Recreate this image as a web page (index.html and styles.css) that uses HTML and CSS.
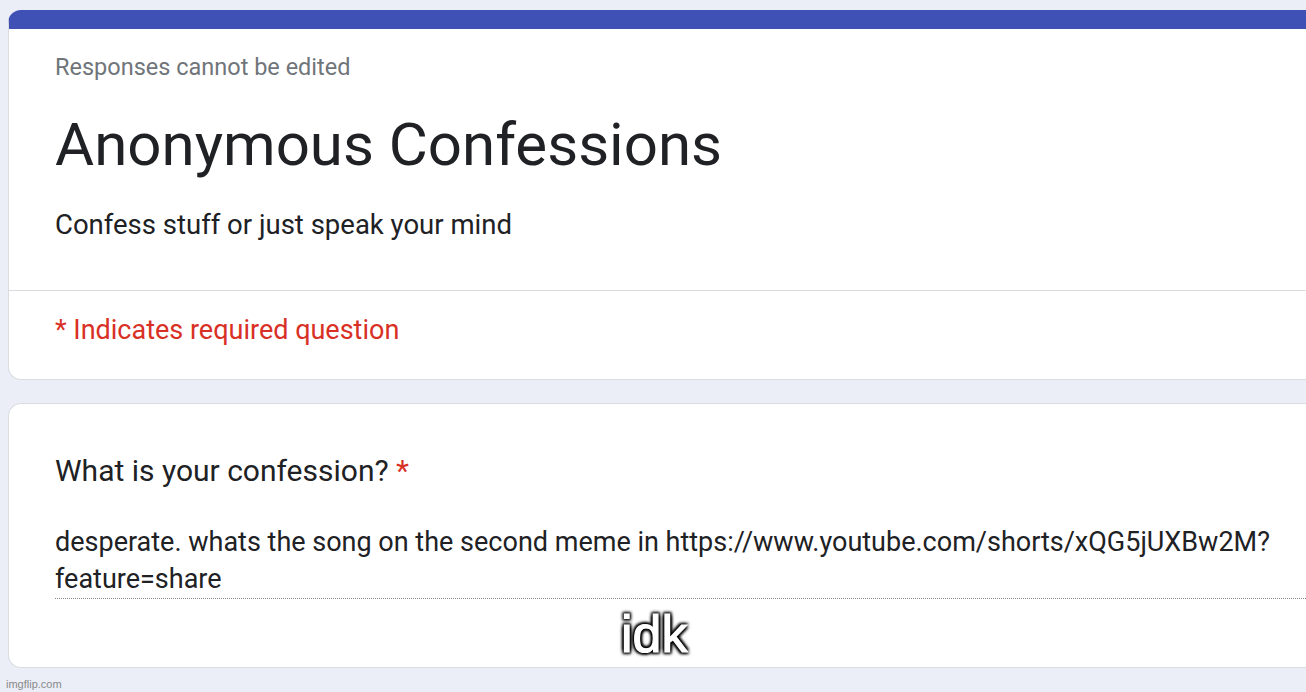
FILE: index.html
```html
<!DOCTYPE html>
<html>
<head>
<meta charset="utf-8">
<link rel="stylesheet" href="styles.css">
</head>
<body>
<div class="page">
  <div class="card header-card">
    <div class="header-main">
      <div class="note">Responses cannot be edited</div>
      <h1 class="title">Anonymous Confessions</h1>
      <div class="desc">Confess stuff or just speak your mind</div>
    </div>
    <div class="divider"></div>
    <div class="required">* Indicates required question</div>
  </div>
  <div class="card question-card">
    <div class="question">What is your confession? <span class="star">*</span></div>
    <div class="answer">desperate. whats the song on the second meme in https://www.youtube.com/shorts/xQG5jUXBw2M?<br>feature=share</div>
    <div class="caption">idk</div>
  </div>
  <div class="watermark">imgflip.com</div>
</div>
</body>
</html>
```
FILE: styles.css
```css
html, body {
  margin: 0;
  padding: 0;
  background: #ebedf7;
  overflow: hidden;
  width: 1306px;
  height: 692px;
}
.page {
  padding: 10px 0 0 8px;
  font-family: Roboto, "Liberation Sans", sans-serif;
  color: #202124;
}
.card {
  background: #fff;
  border: 1px solid #dadce0;
  border-right: none;
  width: 1330px;
  box-sizing: border-box;
}
.header-card {
  border-top: 19px solid #3f51b5;
  border-radius: 13px 0 0 13px;
}
.header-main {
  padding: 22px 0 0 46px;
  height: 261px;
  box-sizing: border-box;
}
.note {
  font-size: 23.5px;
  color: #70757a;
  line-height: 32px;
}
.title {
  margin: 26px 0 0;
  font-weight: 400;
  font-size: 60px;
  line-height: 72px;
}
.desc {
  margin-top: 26px;
  font-size: 27.5px;
  line-height: 36px;
}
.divider {
  border-top: 1px solid #dadce0;
}
.required {
  padding: 21px 0 0 46px;
  height: 88px;
  box-sizing: border-box;
  font-size: 27px;
  line-height: 36px;
  color: #d93025;
}
.question-card {
  margin-top: 23px;
  border-radius: 13px 0 0 13px;
  height: 265px;
  padding: 47px 0 0 46px;
  position: relative;
}
.question {
  font-size: 30px;
  line-height: 40px;
}
.star { color: #d93025; }
.answer {
  margin-top: 33px;
  font-size: 27px;
  line-height: 37px;
  border-bottom: 1px dotted #80868b;
}
.caption {
  position: absolute;
  left: 612px;
  top: 204px;
  font-family: "Liberation Sans", Arial, sans-serif;
  font-size: 52px;
  line-height: 52px;
  color: #fff;
  -webkit-text-stroke: 1.2px #fff;
  text-shadow: 0 0 3px #000, 0 0 3px #000, 2px 2px 3px #000, -2px -2px 3px #000, 2px -2px 3px #000, -2px 2px 3px #000;
}
.watermark {
  font-family: "Liberation Sans", Arial, sans-serif;
  font-size: 11px;
  color: #8a8a8a;
  margin: 10px 0 0 -2px;
}
```
